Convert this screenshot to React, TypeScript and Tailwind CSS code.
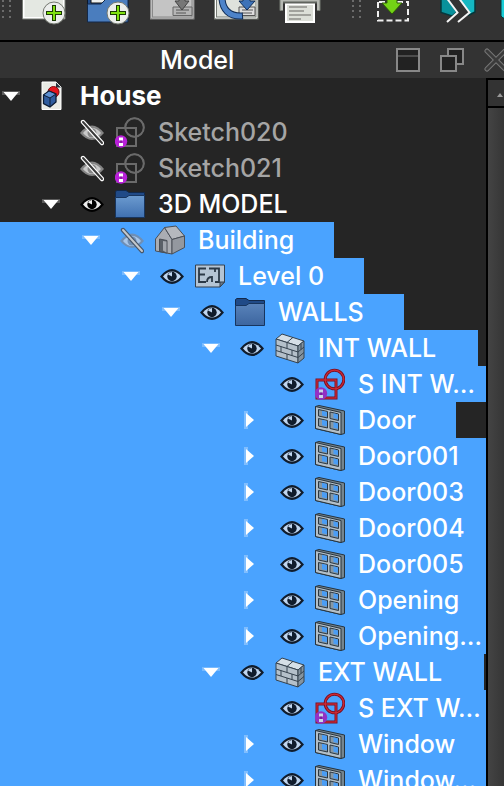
import React from "react";

type IconKind = "doc" | "sketch" | "sketchOff" | "folder" | "building" | "level" | "wall" | "window";

interface TreeItem {
  label: string;
  level: string;
  icon: IconKind;
  width?: string;
  arrow?: "open" | "closed";
  eye?: "on" | "off";
  tone?: string;
}

const L0 = "pl-0";
const L1 = "pl-10";
const L2 = "pl-20";
const L3 = "pl-[120px]";
const L4 = "pl-[160px]";
const L5 = "pl-[200px]";
const L6 = "pl-[240px]";

const items: TreeItem[] = [
  { label: "House", level: L0, icon: "doc", arrow: "open", tone: "text-[26px] font-bold text-white" },
  { label: "Sketch020", level: L1, icon: "sketchOff", eye: "off", tone: "text-[#a5a5a5]" },
  { label: "Sketch021", level: L1, icon: "sketchOff", eye: "off", tone: "text-[#a5a5a5]" },
  { label: "3D MODEL", level: L1, icon: "folder", eye: "on", arrow: "open" },
  { label: "Building", level: L2, icon: "building", eye: "off", arrow: "open", width: "w-[334px]" },
  { label: "Level 0", level: L3, icon: "level", eye: "on", arrow: "open", width: "w-[364px]" },
  { label: "WALLS", level: L4, icon: "folder", eye: "on", arrow: "open", width: "w-[404px]" },
  { label: "INT WALL", level: L5, icon: "wall", eye: "on", arrow: "open", width: "w-[478px]" },
  { label: "S INT W…", level: L6, icon: "sketch", eye: "on", width: "w-full" },
  { label: "Door", level: L6, icon: "window", eye: "on", arrow: "closed", width: "w-[456px]" },
  { label: "Door001", level: L6, icon: "window", eye: "on", arrow: "closed", width: "w-full" },
  { label: "Door003", level: L6, icon: "window", eye: "on", arrow: "closed", width: "w-full" },
  { label: "Door004", level: L6, icon: "window", eye: "on", arrow: "closed", width: "w-full" },
  { label: "Door005", level: L6, icon: "window", eye: "on", arrow: "closed", width: "w-full" },
  { label: "Opening", level: L6, icon: "window", eye: "on", arrow: "closed", width: "w-full" },
  { label: "Opening…", level: L6, icon: "window", eye: "on", arrow: "closed", width: "w-full" },
  { label: "EXT WALL", level: L5, icon: "wall", eye: "on", arrow: "open", width: "w-[484px]" },
  { label: "S EXT W…", level: L6, icon: "sketch", eye: "on", width: "w-full" },
  { label: "Window", level: L6, icon: "window", eye: "on", arrow: "closed", width: "w-full" },
  { label: "Window…", level: L6, icon: "window", eye: "on", arrow: "closed", width: "w-full" },
];

function Eye({ off, selected }: { off: boolean; selected: boolean }) {
  const white = selected ? "#c0d6f0" : "#ececec";
  const dark = selected ? "#101c2c" : "#000";
  if (off) {
    return (
      <svg viewBox="0 0 24 28" className="h-7 w-6">
        <path d="M0 15Q6 7.500 12 7.500T24 15Q18 22 12 22T0 15Z" fill={selected ? "#6f8fb5" : "#858585"} />
        <path d="M3 15Q7 10 12 10T21 15Q17 20 12 20T3 15Z" fill={selected ? "#a9c6e8" : "#c9c9c9"} />
        <circle cx="12" cy="15" r="4.500" fill={selected ? "#6f8fb5" : "#858585"} />
        <circle cx="13" cy="14" r="1.500" fill="#ccc" />
        <path d="M3 4L22 25" stroke={selected ? "#47566a" : "#fff"} strokeWidth="4.400" strokeLinecap="round" />
        <path d="M3 4L22 25" stroke={selected ? "#c4c8cc" : "#3a3a3a"} strokeWidth="2" strokeLinecap="round" />
      </svg>
    );
  }
  return (
    <svg viewBox="0 0 24 28" className="h-7 w-6">
      <path d="M0 14.500Q6 7 12 7T24 14.500Q18 22 12 22T0 14.500Z" fill={dark} />
      <path d="M3 14.500Q7 9.500 12 9.500T21 14.500Q17 19.500 12 19.500T3 14.500Z" fill={white} />
      <circle cx="12" cy="14.500" r="4.700" fill={dark} />
      <path d="M12 14.500V10A4.500 4.500 0 0 0 8 12.500Z" fill={white} />
    </svg>
  );
}

function SketchIcon({ off }: { off: boolean }) {
  const outer = off ? "#6b6b6b" : "#7d1022";
  const inner = off ? "#6b6b6b" : "#cf2a37";
  const weight = off ? 2 : 3;
  return (
    <svg viewBox="0 0 30 32" className="h-8 w-[30px]">
      <g fill="none">
        <rect x="2" y="12" width="19" height="18" stroke={outer} strokeWidth={weight} />
        <circle cx="19.500" cy="11.500" r="9.300" stroke={outer} strokeWidth={weight} />
        <rect x="2" y="12" width="19" height="18" stroke={inner} strokeWidth="1.200" />
        <circle cx="19.500" cy="11.500" r="9.300" stroke={inner} strokeWidth="1.200" />
      </g>
      <circle cx="6" cy="25.500" r="6.200" fill={off ? "#b820d8" : "#9231c4"} />
      <path d="M4 21.500h4v3h-4zM4 27h4v3h-4z" fill={off ? "#fff" : "#c9d6e6"} />
      <path d="M5.500 24.500h1v2.500h-1z" fill="#5c1370" />
    </svg>
  );
}

function ItemIcon({ kind, selected }: { kind: IconKind; selected: boolean }) {
  switch (kind) {
    case "doc":
      return (
        <svg viewBox="0 0 22 30" className="h-[30px] w-[22px]">
          <path d="M2 1H16L21 6V28.500H2Z" fill="#e9ebe5" stroke="#fff" />
          <path d="M16 1.500V6.500H21Z" fill="#27323c" />
          <circle cx="13.500" cy="11" r="5.500" fill="#e3151c" stroke="#7f0c10" />
          <path d="M3.500 14L9 10L16 13V21L10 26L3.500 22.500Z" fill="#2f5c9e" stroke="#0c1c33" strokeWidth="1.300" />
          <path d="M3.500 14L10 17L16 13L9 10Z" fill="#5c8fd0" stroke="#0c1c33" />
          <path d="M10 17V26" stroke="#0c1c33" />
        </svg>
      );
    case "sketchOff":
      return <SketchIcon off />;
    case "sketch":
      return <SketchIcon off={false} />;
    case "folder":
      return (
        <svg viewBox="0 0 30 30" className="h-[30px] w-[30px]">
          <defs>
            <linearGradient id={selected ? "fs" : "fn"} x1="0" y1="0" x2="0" y2="1">
              <stop offset="0" stopColor={selected ? "#5983ba" : "#6c9bd0"} />
              <stop offset="1" stopColor={selected ? "#3c659f" : "#3f70b0"} />
            </linearGradient>
          </defs>
          <path d="M.5 2.500L2 1.500H11L14 3.500H29.500V9H.5Z" fill="#204a87" stroke="#12294b" />
          <path d="M.5 8.500H11L14 6.500H29.500V28.500H.5Z" fill={selected ? "url(#fs)" : "url(#fn)"} stroke="#17355f" />
        </svg>
      );
    case "building":
      return (
        <svg viewBox="0 0 30 30" className="h-[30px] w-[30px]" stroke="#4a4f57" strokeLinejoin="round">
          <path d="M.5 14L9.500 2.500L17 14.500V29L.5 26Z" fill="#aaadb3" />
          <path d="M9.500 2.500L21 1L29.500 11L17 14.500Z" fill="#b5b8be" />
          <path d="M17 14.500L29.500 11V22.500L17 29Z" fill="#94989f" />
          <path d="M4.500 26.500V14L12 15.500V28Z" fill="#5a6068" />
          <path d="M8 16L11.500 16.500V27.500L8 25.500Z" fill="#a2a6ad" stroke="none" />
        </svg>
      );
    case "level":
      return (
        <svg viewBox="0 0 30 24" className="h-6 w-[30px]" fill="none">
          <path d="M.5 1H29.500V18L25 23H.5Z" fill="#b4c4d4" stroke="#34414f" />
          <path d="M29.500 18H25V23Z" fill="#6a7a8b" stroke="#34414f" />
          <path d="M11 4.500H4V18H11M4 10.500H10M14 4.500H24V18H20M12 18C12 15 14 13 17 13V18M20 4.500V8" stroke="#2b3947" strokeWidth="1.800" />
        </svg>
      );
    case "wall":
      return (
        <svg viewBox="0 0 30 32" className="h-8 w-[30px]" stroke="#35424e" strokeLinejoin="round">
          <path d="M1 7L7 2L29 9L23 14Z" fill="#d5dfe7" />
          <path d="M1 7L23 14V31L1 24Z" fill="#b4c0ca" />
          <path d="M23 14L29 9V26L23 31Z" fill="#84939f" />
          <path d="M12 10.500L18 5.300M1 13L23 20L29 15M1 18.500L23 25.500L29 20.500M12 10.500V16.500M6 14.600V20M17 18V23.600M12 22V27.500M26 12V17.500" fill="none" />
        </svg>
      );
    case "window":
      return (
        <svg viewBox="0 0 30 30" className="h-[30px] w-[30px]" strokeLinejoin="round">
          <path d="M.5 1.500L4 .5L29.500 6V28.500L26 29.500L.5 23.500Z" fill="#75858f" stroke="#26333d" />
          <path d="M.5 1.500L26 7.500V29.500L.5 23.500Z" fill="#b3bfc8" stroke="#26333d" />
          <path
            d="M3.500 4.500L12.500 6.500V13L3.500 11ZM15 7L23.500 9V15.500L15 13.500ZM3.500 13.500L12.500 15.500V23L3.500 21ZM15 16L23.500 18V25.500L15 23.500Z"
            fill="#8798a5"
            stroke="#2b3843"
          />
          <path
            d="M7 5.800L12 7V11.500L7 10.400ZM18.500 8.300L23 9.400V14L18.500 13ZM7 14.800L12 16V21.300L7 20.200ZM18.500 17.300L23 18.400V23.800L18.500 22.800Z"
            fill="#4a9df5"
          />
        </svg>
      );
  }
}

function Arrow({ state }: { state: "open" | "closed" }) {
  return state === "open" ? (
    <svg viewBox="0 0 18 10" className="h-[10px] w-[18px]">
      <path d="M0 0H18V4H0Z" fill="#fff" opacity=".25" />
      <path d="M1.500 1H16.500L9 10Z" fill="#fff" />
    </svg>
  ) : (
    <svg viewBox="0 0 10 18" className="h-[18px] w-[10px]">
      <path d="M0 0H4V18H0Z" fill="#fff" opacity=".3" />
      <path d="M2 2V16L10 9Z" fill="#fff" />
    </svg>
  );
}

function Row({ item }: { item: TreeItem }) {
  const selected = item.width !== undefined;
  return (
    <li
      role="treeitem"
      aria-selected={selected}
      className={`flex h-9 items-center whitespace-nowrap ${item.level} ${item.width ?? ""} ${selected ? "bg-[#4aa3ff]" : ""}`}
    >
      <span className="flex w-10 shrink-0 items-center">
        {item.arrow && (
          <button aria-label={`Toggle ${item.label}`} className={item.arrow === "open" ? "px-[2px]" : "px-1"}>
            <Arrow state={item.arrow} />
          </button>
        )}
      </span>
      {item.eye && (
        <button aria-label={`Visibility of ${item.label}`} className="mr-[11px] shrink-0">
          <Eye off={item.eye === "off"} selected={selected} />
        </button>
      )}
      <span className={`flex shrink-0 items-center ${item.eye ? "w-[43px]" : "w-10"}`}>
        <ItemIcon kind={item.icon} selected={selected} />
      </span>
      <span className={item.tone ?? "text-white"}>{item.label}</span>
    </li>
  );
}

function Plus() {
  return (
    <g>
      <circle cx="32" cy="13" r="11" fill="#eceeec" stroke="#73776f" />
      <path d="M32 5V21M24 13H40" stroke="#1c3a05" strokeWidth="4" />
      <path d="M32 6V20M25 13H39" stroke="#7fe010" strokeWidth="2" />
    </g>
  );
}

function Grip() {
  return (
    <svg viewBox="0 0 10 20" className="h-5 w-[10px] shrink-0" fill="#6b6b6b">
      <path d="M0 0h2v2h-2zM7 0h2v2h-2zM0 5h2v2h-2zM7 5h2v2h-2zM0 10h2v2h-2zM7 10h2v2h-2zM0 16h2v2h-2zM7 16h2v2h-2z" />
    </svg>
  );
}

function Tool({ label, children }: { label: string; children: React.ReactNode }) {
  return (
    <button aria-label={label} className="mr-4 shrink-0">
      <svg viewBox="0 0 48 26" className="h-[26px] w-12" fill="none">
        {children}
      </svg>
    </button>
  );
}

function Toolbar() {
  return (
    <div className="flex h-10 shrink-0 items-start overflow-hidden bg-[#333] pl-[2px]">
      <Grip />
      <span className="w-[10px] shrink-0" />
      <Tool label="New document">
        <path d="M1.500 -8H42V18H1.500Z" fill="#e4e8e2" stroke="#fff" strokeWidth="2" />
        <path d="M.5 -8V19H43V-8" stroke="#777c75" />
        <Plus />
      </Tool>
      <Tool label="Open document">
        <path d="M1.500 -5H42V12H1.500Z" fill="#204a87" stroke="#0b1729" />
        <path d="M5 -5H36V3H5Z" fill="#eef0ee" stroke="#111" />
        <path d="M1.500 4H15L20 -1H42V22H1.500Z" fill="#4a7dbe" stroke="#12294b" />
        <Plus />
      </Tool>
      <Tool label="Save document">
        <path d="M1.500 -5H43V18H1.500Z" fill="#c4c4c4" stroke="#8a8a8a" strokeWidth="3" />
        <path d="M1.500 -5H43V18H1.500Z" stroke="#bbb" />
        <path d="M23 7H42V15.500H23Z" fill="#b5b5b5" stroke="#666" />
        <path d="M26 10H39M26 13H36" stroke="#555" />
        <path d="M29 -3H35V1H39L32 10L25 1H29Z" fill="#777" stroke="#444" />
      </Tool>
      <Tool label="Revert document">
        <path d="M1.500 -5H43V18H1.500Z" fill="#dfe2dc" stroke="#777c75" strokeWidth="3" />
        <path d="M1.500 -5H43V18H1.500Z" stroke="#fff" />
        <path d="M25 7H41V15.500H25Z" fill="#ddd" stroke="#555" />
        <path d="M28 10H39M28 13H38" stroke="#555" />
        <path d="M8 -3C8 9 15 17 29 16" stroke="#102c55" strokeWidth="7" />
        <path d="M8 -3C8 9 15 17 28 16" stroke="#4d83c9" strokeWidth="5" />
        <path d="M29 -3H36V1H41L33 10L25 1H29Z" fill="#3d72b8" stroke="#102c55" />
      </Tool>
      <Tool label="Print">
        <path d="M2 -5H42V10.500H2Z" fill="#b5b8b2" stroke="#777c75" />
        <path d="M5 2.500H39V11H5Z" fill="#333" />
        <path d="M8 4H36V22H8Z" fill="#dcdfd8" stroke="#fff" strokeWidth="2" />
        <path d="M5 2.500H39" stroke="#5f635d" strokeWidth="2" />
        <path d="M11 7H29M11 11H26M11 15H33M11 19H23" stroke="#8d8f89" strokeWidth="1.500" />
      </Tool>
      <span className="w-[10px] shrink-0" />
      <Grip />
      <span className="w-[14px] shrink-0" />
      <Tool label="Import">
        <path d="M2 2V20.500H32V2Z" stroke="#f0f0f0" strokeWidth="2" strokeDasharray="6 3" />
        <path d="M11 -4H21V3H26L16 14L6 3H11Z" fill="#73d216" stroke="#2c5a06" />
      </Tool>
      <Tool label="Section">
        <path d="M1 -4H6L17 12L12 16L1 12.500Z" fill="#08919b" stroke="#04383c" strokeWidth="1.500" />
        <path d="M21 -4H35V12L29 15V12L19 -1Z" fill="#14b8c2" stroke="#04383c" strokeWidth="1.500" />
        <path d="M6 -3L17.500 12.500L7 22M18 -3L29.500 12.500L18 22" stroke="#f4f4f4" strokeWidth="2" />
      </Tool>
      <svg viewBox="0 0 24 26" className="-ml-1 h-[26px] w-6 shrink-0">
        <path d="M1 -4H23V18H3L1 16Z" fill="#19cdd6" stroke="#04383c" />
      </svg>
    </div>
  );
}

export default function App() {
  return (
    <main className="flex h-screen flex-col overflow-hidden bg-[#252525] font-['Inter','Liberation_Sans',sans-serif] text-[25px] leading-9 font-medium">
      <Toolbar />
      <header className="flex h-[38px] shrink-0 items-center border-t-2 border-black bg-[#333] text-white">
        <h1 className="min-w-0 flex-1 pl-[160px]">Model</h1>
        <div className="flex shrink-0 items-center gap-5">
          <button aria-label="Dock">
            <svg viewBox="0 0 24 24" className="size-6" fill="#222" stroke="#888" strokeWidth="2">
              <path d="M1 1H23V23H1Z" />
              <path d="M2 8H22" stroke="#777" strokeWidth="1" />
            </svg>
          </button>
          <button aria-label="Float">
            <svg viewBox="0 0 24 24" className="size-6" fill="#222" stroke="#888" strokeWidth="2">
              <path d="M8 1H23V16H8Z" />
              <path d="M1 8H16V23H1Z" />
            </svg>
          </button>
          <button aria-label="Close" className="w-5 overflow-hidden">
            <svg viewBox="0 0 24 24" className="size-6" fill="none" strokeLinecap="round">
              <path d="M3 3L21 21M21 3L3 21" stroke="#777" strokeWidth="5" />
              <path d="M3 3L21 21M21 3L3 21" stroke="#3b3b3b" strokeWidth="3" />
            </svg>
          </button>
        </div>
      </header>
      <div className="flex min-h-0 flex-1">
        <ul role="tree" aria-label="Model" className="min-w-0 flex-1 overflow-hidden">
          {items.map((item) => (
            <Row key={item.label} item={item} />
          ))}
        </ul>
        <div className="flex w-[18px] shrink-0 flex-col border-l-2 border-black bg-linear-to-r from-[#444] to-[#363636]">
          <button aria-label="Scroll up" className="flex h-[30px] items-center justify-end border-y-2 border-black bg-[#333] pt-1 pr-px">
            <svg viewBox="0 0 6 4" className="h-1 w-[6px]">
              <path d="M0 4L3 0L6 4Z" fill="#999" />
            </svg>
          </button>
        </div>
      </div>
    </main>
  );
}
